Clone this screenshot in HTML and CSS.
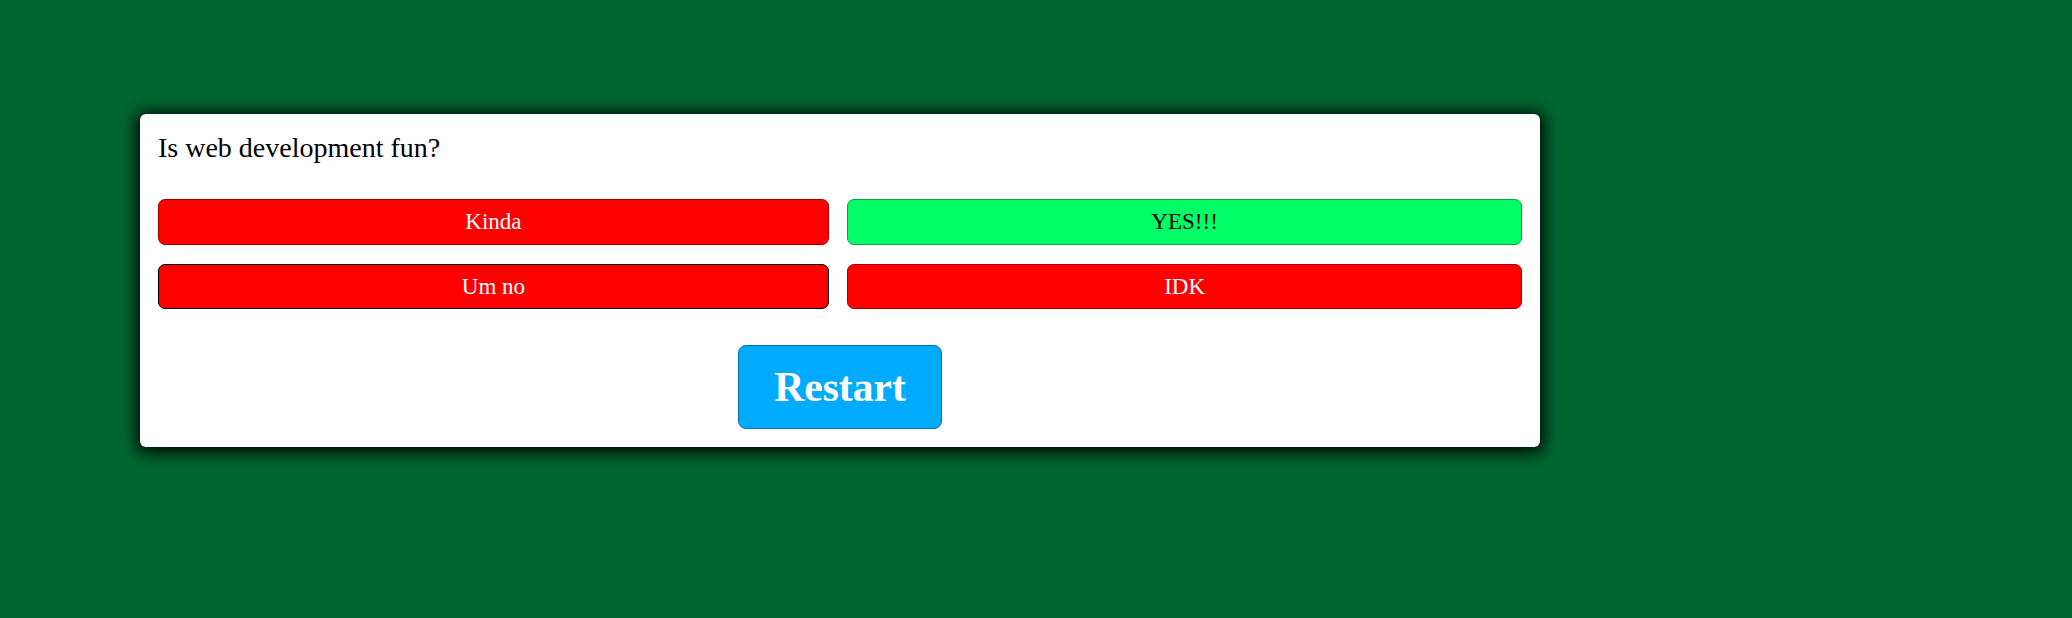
FILE: index.html
```html
<!DOCTYPE html>
<html lang="en">
<head>
<meta charset="utf-8">
<title>Quiz</title>
<link rel="stylesheet" href="styles.css">
</head>
<body>
  <div class="card">
    <h2 class="question">Is web development fun?</h2>
    <div class="answers">
      <button class="answer wrong">Kinda</button>
      <button class="answer right">YES!!!</button>
      <button class="answer wrong dark">Um no</button>
      <button class="answer wrong">IDK</button>
    </div>
    <div class="controls">
      <button class="restart">Restart</button>
    </div>
  </div>
</body>
</html>
```

FILE: styles.css
```css
html, body {
  margin: 0;
  padding: 0;
}
body {
  background: #006630;
  min-height: 618px;
  padding: 114px 0 0 140px;
  box-sizing: border-box;
  font-family: "Liberation Serif", "Times New Roman", serif;
}
.card {
  width: 1400px;
  box-sizing: border-box;
  background: #ffffff;
  border-radius: 6px;
  padding: 18px 18px 18px 18px;
  box-shadow: 0 2px 16px 4px rgba(0, 0, 0, 0.92);
}
.question {
  margin: 0 0 35px 0;
  font-size: 28px;
  line-height: 32px;
  font-weight: normal;
  color: #000;
}
.answers {
  display: grid;
  grid-template-columns: 671fr 675fr;
  column-gap: 18.4px;
  row-gap: 19px;
}
.answer {
  font-family: "Liberation Serif", "Times New Roman", serif;
  font-size: 23px;
  line-height: 25.5px;
  padding: 9px 10px;
  border-radius: 7px;
  border: 1px solid #a00000;
  margin: 0;
}
.wrong {
  background: #ff0000;
  color: #ffffff;
}
.dark {
  border-color: #000000;
}
.right {
  background: #00ff66;
  color: #000000;
  border-color: #00a844;
}
.controls {
  display: flex;
  justify-content: center;
  margin-top: 36px;
}
.restart {
  font-family: "Liberation Serif", "Times New Roman", serif;
  font-weight: bold;
  font-size: 41.6px;
  line-height: 46px;
  padding: 18px 35px;
  background: #00aaff;
  color: #ffffff;
  border: 1px solid #0073aa;
  border-radius: 8px;
  margin: 0;
}
```
